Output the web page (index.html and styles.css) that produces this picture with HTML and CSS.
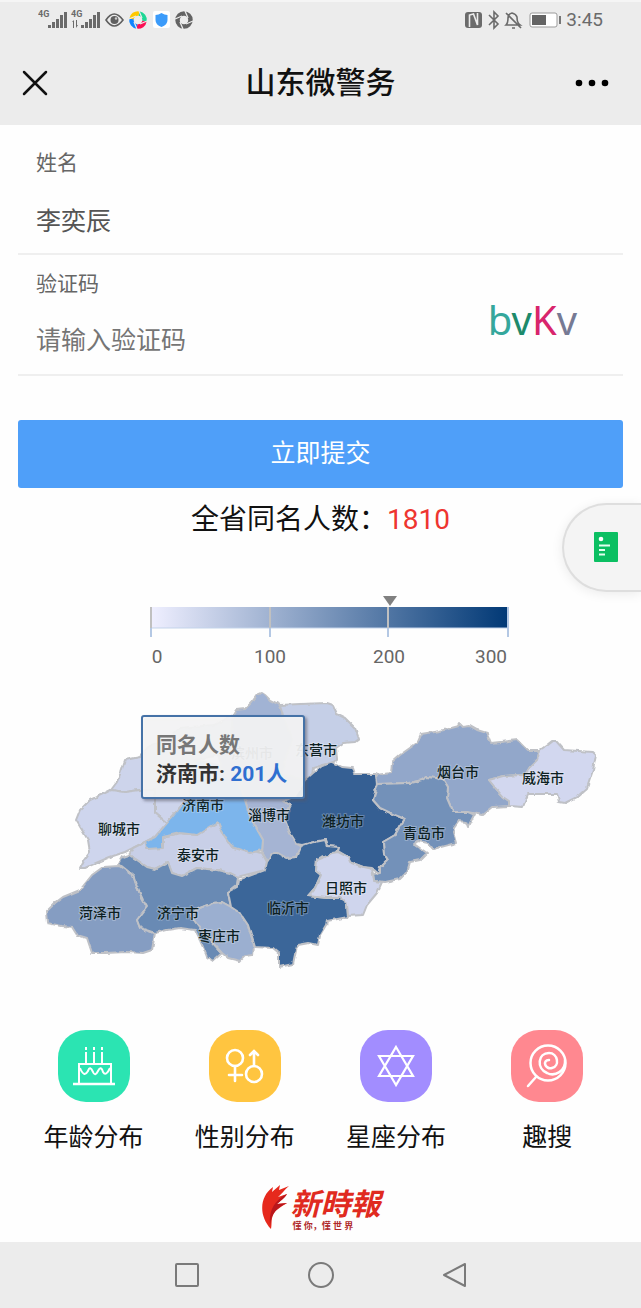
FILE: index.html
```html
<!DOCTYPE html>
<html lang="zh-CN">
<head>
    <meta charset="UTF-8">
    <meta name="viewport" content="width=device-width, initial-scale=1.0">
    <title>山东微警务</title>
    <link rel="stylesheet" href="styles.css">
</head>
<body>
    <header class="top">
        <div class="status-bar">
            <svg class="status-left" width="160" height="24" viewBox="0 0 160 24" aria-hidden="true">
                <g fill="#6b6b6b">
                    <text x="0" y="11" class="net">4G</text>
                    <path d="M10 19h3v3h-3zM14 16h3v6h-3zM18 13h3v9h-3zM22 9h3v13h-3zM26 6h3v16h-3z"/>
                    <text x="33" y="11" class="net">4G</text>
                    <path d="M34 16l2-2v8h-1v-6zM38 14v8l2-3h-1v-5z"/>
                    <path d="M43 19h3v3h-3zM47 16h3v6h-3zM51 13h3v9h-3zM55 9h3v13h-3zM59 6h3v16h-3z"/>
                </g>
                <path d="M68 14q8-12 17 0q-9 12-17 0z" fill="none" stroke="#5f5f5f" stroke-width="1.6"/>
                <circle cx="76.500" cy="14" r="4" fill="#5f5f5f"/><circle cx="78" cy="12.500" r="1.200" fill="#ccc"/>
                <g transform="translate(100 14)" fill="none" stroke-width="4.500">
                    <path d="M-6.500 -1A6.500 6.500 0 0 1 1 -6.500" stroke="#ffc800"/>
                    <path d="M1 -6.500A6.500 6.500 0 0 1 6.500 1" stroke="#1ed795"/>
                    <path d="M6.500 1A6.500 6.500 0 0 1 -1 6.500" stroke="#fb1054"/>
                    <path d="M-1 6.500A6.500 6.500 0 0 1 -6.500 -1" stroke="#0f84ff"/>
                    <path d="M-9 -1L-2 -4M1 -9L4 -2M9 1L2 4M-1 9L-4 2" stroke="#ececec" stroke-width="1.200"/>
                </g>
                <rect x="115" y="5" width="17" height="17" rx="2" fill="#fff"/>
                <path d="M123.500 7q3 2 6 2v5q0 5-6 7q-6-2-6-7v-5q3 0 6-2z" fill="#3b9bfa"/>
                <g transform="translate(146 14)" fill="none">
                    <circle r="6.500" stroke="#636363" stroke-width="4.500"/>
                    <path d="M-9 -1L-2 -4M1 -9L4 -2M9 1L2 4M-1 9L-4 2" stroke="#ececec" stroke-width="1.300"/>
                </g>
            </svg>
            <div class="status-right">
                <svg width="96" height="24" viewBox="0 0 96 24" aria-hidden="true">
                    <rect x="0" y="6" width="17" height="16" rx="3" fill="#6b6b6b"/>
                    <path d="M4.500 21V9l4-1l4 11V7" fill="none" stroke="#ececec" stroke-width="1.600"/>
                    <path d="M24 9l9 9-4 4V6l4 4-9 9" fill="none" stroke="#6b6b6b" stroke-width="1.600"/>
                    <path d="M42 19h13q-3-2-3-8q-1-3-5-4q-4 1-4 5q0 5-2 7zM47 22h3M41 7l15 15" fill="none" stroke="#6b6b6b" stroke-width="1.600"/>
                    <rect x="65" y="7" width="27" height="14" rx="2" fill="#fff" stroke="#9b9b9b"/>
                    <rect x="67" y="9" width="14" height="10" fill="#646464"/>
                    <rect x="94" y="10" width="2" height="8" fill="#777"/>
                </svg>
                <span>3:45</span>
            </div>
        </div>
        <div class="title-bar">
            <button type="button" class="icon-button" aria-label="关闭">
                <svg width="26" height="26" viewBox="0 0 26 26"><path d="M2 2l22 22M24 2L2 24" stroke="#111" stroke-width="2.500" stroke-linecap="round"/></svg>
            </button>
            <h1>山东微警务</h1>
            <button type="button" class="icon-button more" aria-label="更多">
                <svg width="34" height="8" viewBox="0 0 34 8"><circle cx="4" cy="4" r="3.300"/><circle cx="17" cy="4" r="3.300"/><circle cx="30" cy="4" r="3.300"/></svg>
            </button>
        </div>
    </header>

    <main>
        <form class="query">
            <div class="field">
                <label for="name">姓名</label>
                <input type="text" id="name" value="李奕辰">
            </div>
            <div class="field field-code">
                <div class="field-main">
                    <label for="code">验证码</label>
                    <input type="text" id="code" placeholder="请输入验证码">
                </div>
                <button type="button" class="captcha"><span class="c1">b</span><span class="c2">v</span><span class="c3">K</span><span class="c4">v</span></button>
            </div>
            <button type="submit" class="submit">立即提交</button>
        </form>

        <p class="total">全省同名人数：<span>1810</span></p>

        <svg class="chart" viewBox="0 0 641 400" role="img" aria-label="全省同名人数分布">
            <defs>
                <linearGradient id="scale">
                    <stop offset="0" stop-color="#efefff"/>
                    <stop offset="1" stop-color="#003875"/>
                </linearGradient>
                <filter id="coast">
                    <feTurbulence type="fractalNoise" baseFrequency="0.160" numOctaves="1" seed="4"/>
                    <feDisplacementMap in="SourceGraphic" scale="4" xChannelSelector="R" yChannelSelector="G"/>
                </filter>
                <filter id="shade" x="-10%" y="-10%" width="125%" height="130%">
                    <feDropShadow dx="2" dy="2" stdDeviation="1.500" flood-color="#556" flood-opacity="0.600"/>
                </filter>
            </defs>

            <!-- colour scale -->
            <rect x="151" y="27" width="358" height="21" fill="url(#scale)"/>
            <path d="M151 48H509" stroke="#c3d3ea"/>
            <path d="M151 27V57M270 27V57M388 27V57M508 27V57" stroke="#b4c8e4" stroke-width="2"/>
            <path d="M151 27V48M270 27V48M388 27V48" stroke="#c0c0c0" stroke-width="2"/>
            <path d="M383 16H397L390 26z" fill="#808080"/>
            <g class="scale-labels">
                <text x="157" y="83">0</text>
                <text x="270" y="83">100</text>
                <text x="389" y="83">200</text>
                <text x="491" y="83">300</text>
            </g>

            <!-- cities -->
            <g class="cities" transform="translate(0 100)" filter="url(#coast)">
                <path fill="#cdd4eb" d="M111 110L117 102L121 92L125 80L140 77L150 65L165 62L180 48L215 45L233 35L230 65L218 75L195 80L192 95L190 115L182 125L167 143L155 133L155 110L140 110L125 112z"/>
                <path fill="#a1b3d4" d="M233 35L236 30L245 29L252 22L257 15L262 13L265 15L270 20L280 25L283 35L292 60L285 80L283 95L262 100L250 92L240 105L225 95L218 75L230 65z"/>
                <path fill="#c5cfe7" d="M280 25L300 24L327 23L333 25L337 34L345 38L355 48L359 59L355 62L343 63L336 68L337 80L333 83L323 85L313 88L312 97L305 100L283 95L285 80L292 60L283 35z"/>
                <path fill="#ced5ed" d="M111 110L125 112L140 110L155 110L155 133L167 143L155 157L145 162L135 167L125 172L110 177L96 183L85 188L80 188L84 180L90 172L88 160L82 150L76 140L80 130L90 120L105 113z"/>
                <path fill="#a5b4d3" d="M240 105L250 92L262 100L283 95L305 100L295 116L284 121L290 125L284 137L290 153L297 164L302 167L297 177L287 178L273 173L267 182L262 173L263 160L250 137L245 120z"/>
                <path fill="#365f93" d="M305 100L313 93L322 86L333 82L342 87L352 88L354 94L376 94L377 104L373 120L380 128L395 135L405 139L400 146L395 155L383 162L384 175L387 180L380 187L378 193L372 188L363 187L350 182L348 177L338 171L339 167L327 166L325 160L318 161L310 163L302 165L297 164L290 153L284 137L290 125L284 121L295 116z"/>
                <path fill="#92a7ca" d="M376 95L391 93L392 82L400 75L417 63L421 54L440 51L459 46L460 44L463 47L470 46L477 50L487 53L491 63L518 60L528 70L540 70L537 80L530 87L525 95L503 96L489 100L497 110L503 117L509 121L509 126L493 127L483 135L467 132L453 132L447 118L448 107L443 99L427 97L422 100L410 103L378 104z"/>
                <path fill="#d2d7ef" d="M540 70L547 65L552 61L556 61L564 70L593 72L596 75L593 90L587 108L577 117L565 123L559 122L557 114L528 114L523 127L509 126L509 121L503 117L497 110L489 100L503 96L525 95L530 87L537 80z"/>
                <path fill="#7391b9" d="M378 104L410 103L422 100L427 97L443 99L448 107L447 118L453 132L467 132L474 135L468 147L466 142L459 141L454 148L453 152L456 163L433 169L428 163L418 161L414 164L427 173L420 180L410 182L407 192L400 199L385 202L374 201L373 194L380 193L380 187L387 180L384 175L383 162L395 155L400 146L405 139L395 135L380 128L373 120z"/>
                <path fill="#c8cfe7" d="M145 162L133 168L129 175L137 180L147 187L155 189L168 182L172 193L182 196L197 188L217 190L230 193L237 197L253 193L265 190L267 182L262 173L250 170L232 167L222 152L218 142L210 147L197 155L180 153L163 157z"/>
                <path fill="#7cb5ec" d="M182 125L167 143L155 157L145 162L147 169L163 168L163 157L180 153L197 155L210 147L218 142L222 152L232 167L250 173L262 170L263 160L250 137L245 120L240 105L225 95L218 85L195 80L192 95L190 115z"/>
                <path fill="#859dc2" d="M119 186L103 187L92 195L80 210L63 217L55 223L46 232L47 243L62 246L72 247L77 255L87 258L92 273L105 273L127 272L143 273L152 270L155 253L140 248L137 240L147 227L143 220L137 207L133 195z"/>
                <path fill="#698ab4" d="M119 184L123 177L129 175L137 180L147 187L155 189L168 182L172 193L182 196L197 188L217 190L230 193L238 197L237 205L228 212L231 227L222 222L213 223L200 228L190 234L200 248L213 263L222 273L213 281L207 277L203 267L195 250L180 248L167 250L155 253L140 248L137 240L147 227L143 220L137 207L133 195z"/>
                <path fill="#9bafd0" d="M190 235L200 228L213 223L222 222L231 227L240 233L248 245L254 265L253 275L245 276L240 281L228 278L222 273L213 263L200 248z"/>
                <path fill="#3b6699" d="M302 166L297 177L287 178L278 173L273 173L267 182L265 190L257 193L238 200L237 207L228 212L231 227L240 233L248 245L255 267L273 268L279 273L279 287L293 284L297 265L308 263L318 265L320 255L326 245L327 241L348 237L347 223L340 218L327 218L308 216L315 208L321 195L316 191L317 180L325 177L337 173L339 167L327 166L325 160L310 163z"/>
                <path fill="#cfd5ed" d="M338 172L332 173L325 177L317 180L316 191L321 195L315 208L308 216L327 218L340 218L347 223L348 236L363 235L367 225L377 213L382 202L374 201L373 194L372 189L363 187L350 182L348 177z"/>
            </g>
            <g class="city-labels">
                <text x="252" y="178">滨州市</text>
                <text x="316" y="175">东营市</text>
                <text x="458" y="197">烟台市</text>
                <text x="543" y="203">威海市</text>
                <text x="203" y="230">济南市</text>
                <text x="269" y="240">淄博市</text>
                <text x="343" y="246">潍坊市</text>
                <text x="119" y="254">聊城市</text>
                <text x="424" y="258">青岛市</text>
                <text x="198" y="280">泰安市</text>
                <text x="346" y="313">日照市</text>
                <text x="288" y="333">临沂市</text>
                <text x="100" y="338">菏泽市</text>
                <text x="178" y="338">济宁市</text>
                <text x="219" y="361">枣庄市</text>
            </g>

            <!-- tooltip of the selected city -->
            <g class="tooltip">
                <rect x="142" y="136" width="162" height="82" rx="2" filter="url(#shade)"/>
                <text x="156" y="172" class="tip-title">同名人数</text>
                <text x="156" y="201" class="tip-city">济南市: <tspan>201人</tspan></text>
            </g>
        </svg>

        <nav class="entries">
            <a href="#age">
                <svg class="entry-icon age" viewBox="0 0 72 72" fill="none" stroke="#fff" stroke-width="2">
                    <path d="M15 54H57" stroke-width="2.500"/>
                    <path d="M21 53V34H53V53M28 22V33M36 22V33M44 22V33"/>
                    <path d="M28 17V20M36 17V20M44 17V20"/>
                    <path d="M22 38Q26 48 30 41Q32 35 35 42Q37 47 40 41Q43 35 45 42Q48 47 52 38"/>
                </svg>
                <span>年龄分布</span>
            </a>
            <a href="#gender">
                <svg class="entry-icon gender" viewBox="0 0 72 72" fill="none" stroke="#fff" stroke-width="2.600" stroke-linecap="round">
                    <circle cx="26" cy="28" r="8"/><path d="M26 36V51M20 45H33"/>
                    <circle cx="45" cy="44" r="8"/><path d="M45 36V22M41 25L45 21L49 25"/>
                </svg>
                <span>性别分布</span>
            </a>
            <a href="#star">
                <svg class="entry-icon star" viewBox="0 0 72 72" fill="none" stroke="#fff" stroke-width="2.200">
                    <path d="M36 17L53 46H19zM36 55L19 26H53z"/>
                </svg>
                <span>星座分布</span>
            </a>
            <a href="#fun">
                <svg class="entry-icon fun" viewBox="0 0 72 72" fill="none" stroke="#fff" stroke-width="2.500" stroke-linecap="round">
                    <circle cx="37" cy="33" r="17.500"/>
                    <path d="M25 47L17 56"/>
                    <path d="M54 30C55 41 44 47 36 43C25 38 27 23 38 23C47 23 49 36 41 38C34 40 31 30 38 30"/>
                </svg>
                <span>趣搜</span>
            </a>
        </nav>

        <div class="brand">
            <svg width="30" height="46" viewBox="0 0 30 46" aria-hidden="true">
                <path d="M10 44C-3 30-1 11 12 2L11 7L19 0L18 5L28 1C23 5 21 9 17 12L26 9C23 14 19 16 16 19L26 18C20 22 14 25 12 30C10 35 11 39 10 44z" fill="#e6291d"/>
                <path d="M9 40C8 28 11 19 22 11L26 9C23 14 19 16 16 19L26 18C16 23 11 27 9 40z" fill="#b9171c"/>
            </svg>
            <div class="brand-text">
                <strong>新時報</strong>
                <small>懂 你，懂 世 界</small>
            </div>
        </div>
    </main>

    <button type="button" class="float-button" aria-label="记录">
        <svg width="24" height="30" viewBox="0 0 24 30"><rect width="24" height="30" rx="1" fill="#0bbf62"/><circle cx="7" cy="7" r="2.300" fill="#fff"/><path d="M5 13.500H16M5 18H11M5 22.500H11" stroke="#e4fff0" stroke-width="2.200"/></svg>
    </button>

    <footer class="system-nav">
        <button type="button" class="icon-button" aria-label="最近任务"><svg width="26" height="26" viewBox="0 0 26 26"><rect x="2" y="2" width="22" height="22" rx="1"/></svg></button>
        <button type="button" class="icon-button" aria-label="主屏幕"><svg width="26" height="26" viewBox="0 0 26 26"><circle cx="13" cy="13" r="12"/></svg></button>
        <button type="button" class="icon-button" aria-label="返回"><svg width="26" height="26" viewBox="0 0 26 26"><path d="M2 13L23 2V24z" stroke-linejoin="round"/></svg></button>
    </footer>
</body>
</html>
```
FILE: styles.css
```css
/* General styles */
* {
    box-sizing: border-box;
}

body {
    margin: 0;
    position: relative;
    min-height: 100vh;
    display: flex;
    flex-direction: column;
    background-color: #fefefe;
    color: #111;
    font-family: Roboto, "Noto Sans CJK SC", sans-serif;
}

button, input {
    font-family: inherit;
    border: none;
    background: none;
    padding: 0;
}

.icon-button {
    display: flex;
    align-items: center;
    justify-content: center;
}

/* Header */
.top {
    height: 125px;
    background-color: #ececec;
    border-top: 2px solid #f5f5f5;
}

.status-bar {
    height: 38px;
    padding: 4px 38px 10px;
    display: flex;
    align-items: center;
    justify-content: space-between;
}

.status-right {
    display: flex;
    align-items: center;
    gap: 5px;
    color: #6b6b6b;
    font-size: 19px;
    line-height: 24px;
}

.status-right span {
    padding-top: 4px;
}

.net {
    font-size: 9px;
    font-weight: bold;
}

.title-bar {
    display: grid;
    grid-template-columns: 1fr auto 1fr;
    align-items: center;
    padding: 21px 22px 0;
}

.title-bar .icon-button {
    justify-self: start;
}

.title-bar .more {
    justify-self: end;
    margin-right: 10px;
}

h1 {
    margin: 0;
    font-size: 30px;
    line-height: 44px;
    font-weight: 500;
}

/* Form */
.query {
    padding: 0 18px;
}

.field {
    border-bottom: 2px solid #efefef;
    padding: 22px 18px 12px;
    height: 130px;
}

.field label {
    display: block;
    font-size: 21px;
    line-height: 32px;
    color: #666;
}

.field input {
    display: block;
    width: 100%;
    margin-top: 20px;
    height: 40px;
    font-size: 25px;
    color: #555;
    outline: none;
}

.field input::placeholder {
    color: #757575;
    opacity: 1;
}

.field-code {
    display: flex;
    height: 121px;
    padding-top: 13px;
}

.field-main {
    flex: 1;
}

.captcha {
    align-self: center;
    margin-right: 28px;
    padding-top: 10px;
    font-family: "Noto Sans", sans-serif;
    font-size: 40px;
    line-height: 48px;
}

.c1 { color: #35a79c; }
.c2 { color: #1d8a6b; }
.c3 { color: #d8256c; }
.c4 { color: #767a94; }

.submit {
    display: block;
    width: 100%;
    height: 68px;
    margin-top: 44px;
    padding-bottom: 6px;
    border-radius: 3px;
    background-color: #4f9ff9;
    color: #fff;
    font-size: 25px;
}

.total {
    margin: 12px 0 40px;
    text-align: center;
    font-size: 28px;
    line-height: 40px;
}

.total span {
    color: #ee3530;
}

/* Chart */
.chart {
    display: block;
    width: 100%;
}

.scale-labels {
    font-size: 19px;
    fill: #666;
    text-anchor: middle;
}

.cities path {
    stroke: #bfc1c6;
    stroke-width: 2;
    stroke-linejoin: round;
}

.city-labels {
    font-size: 14px;
    font-weight: 500;
    fill: #0d1f22;
    text-anchor: middle;
    stroke: rgba(255, 255, 255, 0.25);
    stroke-width: 2;
    paint-order: stroke;
}

.tooltip rect {
    fill: rgba(249, 249, 249, 0.88);
    stroke: #4572a7;
    stroke-width: 2;
}

.tooltip text {
    font-size: 21px;
    font-weight: bold;
    fill: #333;
}

.tooltip .tip-title {
    fill: #777;
}

.tooltip tspan {
    fill: #2f6fd0;
}

/* Entries */
.entries {
    display: grid;
    grid-template-columns: repeat(4, 1fr);
    padding: 50px 18px 0;
}

.entries a {
    display: flex;
    flex-direction: column;
    align-items: center;
    gap: 18px;
    color: #111;
    text-decoration: none;
    font-size: 25px;
    line-height: 36px;
}

.entry-icon {
    width: 72px;
    height: 72px;
    border-radius: 28px;
}

.age { background-color: #2be4b2; }
.gender { background-color: #ffc540; }
.star { background-color: #a28dff; }
.fun { background-color: #ff8890; }

.brand {
    display: flex;
    justify-content: center;
    padding: 29px 0 11px;
    color: #e02a20;
}

.brand-text {
    display: flex;
    flex-direction: column;
}

.brand-text strong {
    font-family: "Noto Sans CJK TC", sans-serif;
    font-size: 30px;
    line-height: 34px;
    font-style: italic;
}

.brand-text small {
    padding: 2px 0 0 2px;
    font-size: 9px;
    line-height: 10px;
    font-weight: bold;
    color: #b02a2a;
}

/* Sits over the right edge of the page */
.float-button {
    position: absolute;
    top: 503px;
    right: 0;
    width: 79px;
    height: 89px;
    padding: 2px 0 0 6px;
    border: 2px solid #dedede;
    border-right: none;
    border-radius: 45px 0 0 45px;
    background-color: #f4f4f4;
    box-shadow: 0 2px 12px rgba(0, 0, 0, 0.08);
}

/* System navigation */
.system-nav {
    margin-top: auto;
    height: 66px;
    display: flex;
    align-items: center;
    justify-content: center;
    gap: 108px;
    background-color: #ececec;
}

.system-nav svg {
    fill: none;
    stroke: #7a7a7a;
    stroke-width: 2;
}
```
